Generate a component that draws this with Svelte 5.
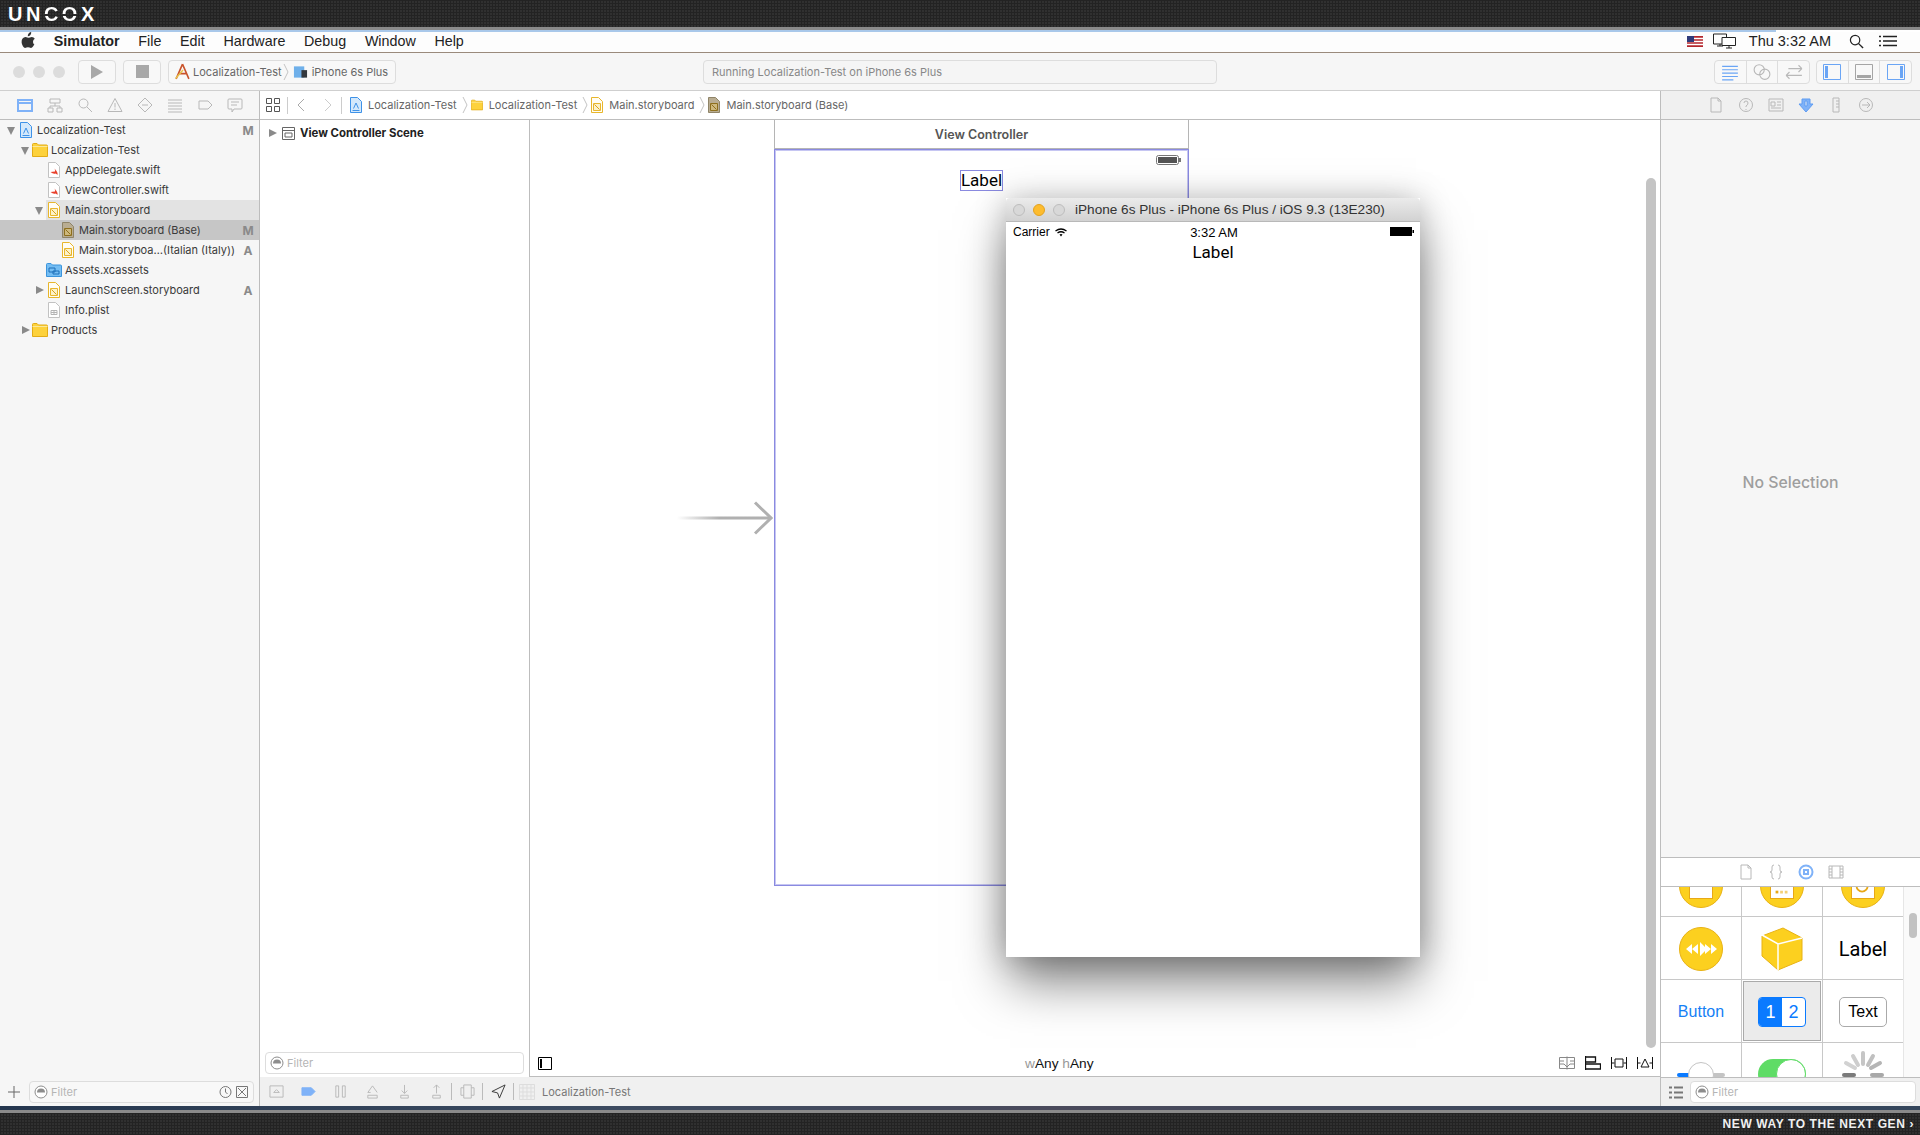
<script>
	const menus = ['File', 'Edit', 'Hardware', 'Debug', 'Window', 'Help'];

	const navIcons = [
		'M1 3h14v11H1z M1 6h14',
		'M3 2h10v4H3z M8 6v3 M3 11V9h10v2 M1 11h5v4H1z M10 11h5v4h-5z',
		'M11 6.500a4.500 4.500 0 1 1-9 0a4.500 4.500 0 1 1 9 0z M10 10l5 5',
		'M8 1.500L15 14.500H1z M8 6v4.500 M8 11.500v1.500',
		'M8 1l7 7-7 7-7-7z M5 8h6',
		'M1 3h14 M1 6h14 M1 9h14 M1 12h14 M1 15h14',
		'M2 4h9l4 4-4 4H2z',
		'M2 2h12q1 0 1 1v8q0 1-1 1H7l-2 3v-3H2q-1 0-1-1V3q0-1 1-1z M4 5h8 M4 8h6'
	];

	const inspectorIcons = [
		'M3 1h7l3 3v11H3z M10 1v3h3',
		'M14.500 8a6.500 6.500 0 1 1-13 0a6.500 6.500 0 1 1 13 0z M6 6q0-2 2-2t2 2q0 2-2 3v1 M8 12v1',
		'M1 2h14v12H1z M3 5h4v4H3z M9 5h4 M9 8h4 M3 11h10',
		'M4 2h8v5h3l-7 8-7-8h3z M7 4h2v5H7z',
		'M5 1h6v14H5z M8 4h3 M8 7h3 M8 10h3',
		'M14.500 8a6.500 6.500 0 1 1-13 0a6.500 6.500 0 1 1 13 0z M4 8h8 M9 5l3 3-3 3'
	];

	const libraryTabs = [
		'M3 1h7l3 3v11H3z M10 1v3h3',
		'M6 1q-2 0-2 2v3q0 2-2 2q2 0 2 2v3q0 2 2 2 M10 1q2 0 2 2v3q0 2 2 2q-2 0-2 2v3q0 2-2 2',
		'M14.500 8a6.500 6.500 0 1 1-13 0a6.500 6.500 0 1 1 13 0z M6 6h4v4H6z',
		'M1 2h14v12H1z M4 2v12 M12 2v12 M1 5h3 M1 8h3 M1 11h3 M12 5h3 M12 8h3 M12 11h3'
	];

	const debugIcons = [
		{ d: 'M1 2h14v12H1z M5 9l3-3 3 3z', x: 'g' },
		{ d: 'M1 4h10l4 4-4 4H1z', x: 'on' },
		{ d: 'M3 2h3v12H3z M10 2h3v12h-3z', x: 'g' },
		{ d: 'M8 2l-5 7h3 M8 2l5 7 M3 12h10v3H3z', x: 'g' },
		{ d: 'M8 1v9 M5 7l3 3 3-3 M4 12h8v3H4z', x: 'g' },
		{ d: 'M8 10V1 M5 4l3-3 3 3 M4 12h8v3H4z', x: 'g' },
		{ sep: true },
		{ d: 'M4 1h8v14H4z M4 4H1v8h3 M12 4h3v8h-3', x: 'g' },
		{ sep: true },
		{ d: 'M15 1L1 8l6 1.500L9 15z', x: 'dk' },
		{ sep: true }
	];

	const tree = [
		{ name: 'Localization-Test', depth: 0, open: true, icon: 'project', badge: 'M' },
		{ name: 'Localization-Test', depth: 1, open: true, icon: 'folder' },
		{ name: 'AppDelegate.swift', depth: 2, icon: 'swift' },
		{ name: 'ViewController.swift', depth: 2, icon: 'swift' },
		{ name: 'Main.storyboard', depth: 2, open: true, icon: 'story', hover: true },
		{ name: 'Main.storyboard (Base)', depth: 3, icon: 'storydark', badge: 'M', selected: true },
		{ name: 'Main.storyboa…(Italian (Italy))', depth: 3, icon: 'story', badge: 'A' },
		{ name: 'Assets.xcassets', depth: 2, icon: 'assets' },
		{ name: 'LaunchScreen.storyboard', depth: 2, closed: true, icon: 'story', badge: 'A' },
		{ name: 'Info.plist', depth: 2, icon: 'plist' },
		{ name: 'Products', depth: 1, closed: true, icon: 'folder' }
	];

	const crumbs = [
		{ name: 'Localization-Test', icon: 'project' },
		{ name: 'Localization-Test', icon: 'folder' },
		{ name: 'Main.storyboard', icon: 'story' },
		{ name: 'Main.storyboard (Base)', icon: 'storydark' }
	];
</script>

{#snippet ico(d, cls = '', size = 16)}
	<svg class="ico {cls}" viewBox="0 0 16 16" width={size} height={size}><path {d} /></svg>
{/snippet}

{#snippet fileIcon(kind)}
	{#if kind === 'folder'}
		<svg viewBox="0 0 16 14" width="16" height="14">
			<path d="M.5 13.500V1.500q0-1 1-1h3.500l1.500 1.500h8q1 0 1 1v10.500z" fill="#fdd23c" stroke="#e3ac16" />
			<path d="M.5 3.500h15" stroke="#fbe89a" />
		</svg>
	{:else if kind === 'assets'}
		<svg viewBox="0 0 16 14" width="16" height="14">
			<path d="M.5 13.500V1.500q0-1 1-1h3.500l1.500 1.500h8q1 0 1 1v10.500z" fill="#74bdf3" stroke="#3b94dc" />
			<path d="M3 5h6v4H3z M7 8h6v3H7z" fill="none" stroke="#1d6fb8" />
		</svg>
	{:else}
		<svg viewBox="0 0 12 16" width="12" height="16">
			{#if kind === 'project'}
				<path d="M.5.500h7l4 4v11H.5z" fill="#d3e8fb" stroke="#3e92e8" />
				<path d="M3.500 11.500L6 6l2.500 5.500 M2.500 13.500h7" fill="none" stroke="#3e92e8" />
			{:else if kind === 'story'}
				<path d="M.5.500h7l4 4v11H.5z" fill="#fffdf4" stroke="#e8b62c" />
				<path d="M2.500 6.500h7v7h-7z" fill="#fdf2c8" stroke="#e8b62c" />
				<path d="M3.500 7.500l5 5" stroke="#d9a21c" />
			{:else if kind === 'storydark'}
				<path d="M.5.500h7l4 4v11H.5z" fill="#b9ad92" stroke="#8f8468" />
				<path d="M2.500 6.500h7v7h-7z" fill="#cdb87e" stroke="#8e6f1c" />
				<path d="M3.500 7.500l5 5" stroke="#8e6f1c" />
			{:else if kind === 'plist'}
				<path d="M.5.500h7l4 4v11H.5z" fill="#fff" stroke="#c2c2c2" />
				<path d="M3 8.500h6v4H3z M3 10.500h6 M6 8.500v4" fill="none" stroke="#b5b5b5" />
			{:else}
				<path d="M.5.500h7l4 4v11H.5z" fill="#fff" stroke="#c2c2c2" />
				<path d="M2.500 10q3 2.500 5 1.500q1.500.5 2 1.500q.5-2-1-4l-2-2.500q1 2 .5 3z" fill="#e8402c" />
			{/if}
		</svg>
	{/if}
{/snippet}

{#snippet filter(extra = false)}
	<div class="filter">
		<svg viewBox="0 0 14 14" width="14" height="14">
			<circle cx="7" cy="7" r="6" fill="#fff" stroke="#8d8d8d" />
			<path d="M3 7.500a4 4 0 0 1 8 0z" fill="#8d8d8d" />
		</svg>
		<span>Filter</span>
		{#if extra}
			<svg class="filter-right" viewBox="0 0 30 14" width="30" height="14">
				<circle cx="6.500" cy="7" r="5.500" fill="none" stroke="#777" />
				<path d="M6.500 3.500V7l2 2" fill="none" stroke="#777" />
				<path d="M17.500 1.500h11v11h-11z M19 3l8 8 M27 3l-8 8" fill="none" stroke="#777" />
			</svg>
		{/if}
	</div>
{/snippet}

<div class="screen">
	<header class="banner">
		<span class="logo">UN<span class="slit">CO</span>X</span>
	</header>
	<div class="strip"></div>
	<div class="progress"></div>

	<nav class="menubar">
		<svg class="apple" viewBox="0 0 14 16" width="14" height="16">
			<path d="M10.200 0q.2 2-1 3.200T6.800 4.300q-.2-1.700 1-3T10.200 0zM13.500 11.800q-.6 1.400-1.500 2.700-1 1.400-2 1.400-.7 0-1.500-.4-.8-.3-1.500-.3-.8 0-1.600.4-.7.3-1.300.3-1.100 0-2.200-1.700Q.7 12.200.6 10.200q-.1-2.300 1-3.700 1.100-1.500 3-1.500.7 0 1.700.4.900.4 1.200.4.300 0 1.400-.4 1-.4 1.900-.4 2 .2 3 1.700-1.800 1.100-1.800 3 0 1.500 1 2.500.4.300.5.100z" fill="#333" />
		</svg>
		<b>Simulator</b>
		{#each menus as m}
			<span>{m}</span>
		{/each}
		<div class="menu-right">
			<svg class="flag" viewBox="0 0 16 11" width="16" height="11">
				<rect width="16" height="11" fill="#b3262c" />
				<path d="M0 2.500h16 M0 5.500h16 M0 8.500h16" stroke="#fff" stroke-width="1.400" />
				<rect width="7" height="6" fill="#2f3a7a" />
			</svg>
			<svg class="monitors" viewBox="0 0 23 16" width="23" height="16">
				<path d="M.5 1h13v10H.5z M4 13h6 M7 11v2" fill="none" stroke="#222" />
				<path d="M9 4.500h13.500v8H9z M13 15h6 M16 12.500V15" fill="#fff" stroke="#222" />
			</svg>
			<span class="clock">Thu 3:32 AM</span>
			<svg class="glass" viewBox="0 0 16 16" width="15" height="15">
				<circle cx="6.500" cy="6.500" r="5" fill="none" stroke="#222" stroke-width="1.300" />
				<path d="M10 10l5 5" stroke="#222" stroke-width="1.500" />
			</svg>
			<svg viewBox="0 0 18 12" width="18" height="12">
				<path d="M0 1.500h2 M4 1.500h14 M0 6h2 M4 6h14 M0 10.500h2 M4 10.500h14" stroke="#222" stroke-width="1.600" />
			</svg>
		</div>
	</nav>

	<div class="toolbar">
		<div class="lights">
			<i></i><i></i><i></i>
		</div>
		<button class="tb-btn"><span class="play"></span></button>
		<button class="tb-btn"><span class="stop"></span></button>
		<div class="scheme">
			<svg viewBox="0 0 16 16" width="17" height="17">
				<path d="M8 1l6 14M8 1L2 15 M4 10h8" fill="none" stroke="#c9542c" stroke-width="1.500" />
				<path d="M1 14l7-8 1 1-7 8z" fill="#e8c34a" />
			</svg>
			<span>Localization-Test</span>
			<svg class="chev" viewBox="0 0 6 20" width="6" height="20"><path d="M1 2l4 8-4 8" /></svg>
			<svg class="device" viewBox="0 0 16 14" width="15" height="14">
				<path d="M1 1h11v12H1z" fill="#6fb0ea" />
				<path d="M9 5h6v8H9z" fill="#33383e" />
			</svg>
			<span class="device-name">iPhone 6s Plus</span>
		</div>
		<div class="status">Running Localization-Test on iPhone 6s Plus</div>
		<div class="tb-group">
			<button class="seg">
				{@render ico('M1 3h14 M1 6h14 M1 9h14 M1 12h14 M1 15h10', 'blue', 18)}
			</button>
			<button class="seg">
				{@render ico('M10 6a4.500 4.500 0 1 1-9 0a4.500 4.500 0 1 1 9 0z M15 10a4.500 4.500 0 1 1-9 0a4.500 4.500 0 1 1 9 0z', '', 18)}
			</button>
			<button class="seg">
				{@render ico('M1 11h14 M1 11l3-3 M1 11l3 3 M15 5H3 M15 5l-3-3 M15 5l-3 3', '', 18)}
			</button>
		</div>
		<div class="tb-group">
			<button class="seg">
				<svg viewBox="0 0 18 16" width="18" height="16"><path d="M.5.500h17v15H.5z" fill="none" stroke="#6aa5f5" /><path d="M2 2h3v12H2z" fill="#6aa5f5" /></svg>
			</button>
			<button class="seg">
				<svg viewBox="0 0 18 16" width="18" height="16"><path d="M.5.500h17v15H.5z" fill="none" stroke="#a5a5a5" /><path d="M2 11h14v3H2z" fill="#a5a5a5" /></svg>
			</button>
			<button class="seg">
				<svg viewBox="0 0 18 16" width="18" height="16"><path d="M.5.500h17v15H.5z" fill="none" stroke="#6aa5f5" /><path d="M13 2h3v12h-3z" fill="#6aa5f5" /></svg>
			</button>
		</div>
	</div>

	<div class="main">
		<aside class="navigator">
			<div class="tabs nav-tabs">
				{#each navIcons as d, i}
					<span class="tab">{@render ico(d, i === 0 ? 'blue heavy' : '')}</span>
				{/each}
			</div>
			<div class="tree">
				{#each tree as row}
					<div class="row" class:hover={row.hover} class:selected={row.selected} style="padding-left: {row.depth * 14 + 4}px">
						<span class="tri" class:down={row.open} class:right={row.closed}></span>
						<span class="file-ico">{@render fileIcon(row.icon)}</span>
						<span class="name">{row.name}</span>
						{#if row.badge}<b class="badge">{row.badge}</b>{/if}
					</div>
				{/each}
			</div>
			<div class="nav-foot">
				<svg class="plus" viewBox="0 0 12 12" width="12" height="12"><path d="M6 0v12M0 6h12" stroke="#666" /></svg>
				{@render filter(true)}
			</div>
		</aside>

		<section class="editor">
			<div class="jumpbar">
				<svg class="jb-grid" viewBox="0 0 14 14" width="14" height="14">
					<path d="M.5.500h5v5h-5z M8.500.500h5v5h-5z M.5 8.500h5v5h-5z M8.500 8.500h5v5h-5z" fill="none" stroke="#555" />
				</svg>
				<i class="jb-sep"></i>
				<svg class="jb-back" viewBox="0 0 8 14" width="8" height="14"><path d="M7 1L1 7l6 6" fill="none" stroke="#aaa" /></svg>
				<svg class="jb-fwd" viewBox="0 0 8 14" width="8" height="14"><path d="M1 1l6 6-6 6" fill="none" stroke="#ccc" /></svg>
				<i class="jb-sep"></i>
				{#each crumbs as c, i}
					<span class="crumb">
						<span class="crumb-ico">{@render fileIcon(c.icon)}</span>
						<span>{c.name}</span>
					</span>
					{#if i < crumbs.length - 1}
						<svg class="chev" viewBox="0 0 6 20" width="6" height="20"><path d="M1 2l4 8-4 8" /></svg>
					{/if}
				{/each}
			</div>

			<div class="panes">
				<div class="outline">
					<div class="scene-row">
						<span class="tri right"></span>
						<svg viewBox="0 0 13 13" width="13" height="13">
							<path d="M.5.500h12v12H.5z M.5 3.500h12 M3 6h7v4H3z" fill="none" stroke="#666" />
						</svg>
						<b>View Controller Scene</b>
					</div>
					<div class="outline-foot">{@render filter()}</div>
				</div>

				<div class="canvas">
					<div class="stage">
						<svg class="entry" viewBox="0 0 96 34" width="96" height="34">
							<defs>
								<linearGradient id="fade">
									<stop offset="0" stop-color="#b0b0b0" stop-opacity="0" />
									<stop offset="0.45" stop-color="#b0b0b0" />
								</linearGradient>
							</defs>
							<rect x="0" y="15.500" width="94" height="3" fill="url(#fade)" />
							<path d="M78 1.500L94 17 78 32.500" fill="none" stroke="#b0b0b0" stroke-width="3" />
						</svg>

						<div class="scene">
							<div class="scene-title">View Controller</div>
							<div class="scene-view">
								<svg class="scene-batt" viewBox="0 0 25 10" width="25" height="10">
									<rect x=".5" y=".5" width="22" height="9" rx="2" fill="#fff" stroke="#777" />
									<rect x="2" y="2" width="19" height="6" fill="#555" />
									<rect x="23" y="3" width="2" height="4" fill="#777" />
								</svg>
								<span class="scene-label">Label</span>
							</div>
						</div>

						<div class="sim">
							<div class="sim-title">
								<div class="sim-lights">
									<i></i><i class="min"></i><i></i>
								</div>
								<span>iPhone 6s Plus - iPhone 6s Plus / iOS 9.3 (13E230)</span>
							</div>
							<div class="sim-status">
								<span class="carrier">Carrier</span>
								<svg class="wifi" viewBox="0 0 12 9" width="12" height="9">
									<path d="M.5 3q5.500-4 11 0 M2.500 5q3.500-2.500 7 0" fill="none" stroke="#000" stroke-width="1.300" />
									<path d="M4.500 6.500q1.500-1 3 0L6 8.500z" fill="#000" />
								</svg>
								<span class="sim-time">3:32 AM</span>
								<svg class="sim-batt" viewBox="0 0 24 9" width="24" height="9">
									<rect width="22" height="9" fill="#000" />
									<rect x="22.500" y="3" width="1.500" height="3" fill="#000" />
								</svg>
							</div>
							<div class="sim-label">Label</div>
						</div>

						<div class="scroller"></div>
					</div>

					<div class="canvas-bar">
						<svg viewBox="0 0 14 13" width="14" height="13">
							<path d="M.5.500h13v12H.5z" fill="#fff" stroke="#000" />
							<path d="M2 2h2v9H2z" fill="#000" />
						</svg>
						<span class="size"><em>w</em>Any <em>h</em>Any</span>
						<div class="canvas-tools">
							<svg viewBox="0 0 16 14" width="16" height="14"><path d="M.5 1.500h15v11H.5z M8 .5v13 M1 5h4 M1 8h4 M11 5h4 M11 8h4 M5 8l3 3 3-3" fill="none" stroke="#888" /></svg>
							<svg viewBox="0 0 16 14" width="16" height="14"><path d="M.5 0v14 M.5 1h10v5H.5 M.5 8h15v5H.5" fill="none" stroke="#111" stroke-width="1.300" /></svg>
							<svg viewBox="0 0 16 14" width="16" height="14"><path d="M.5 1v12 M15.500 1v12 M.5 7h3 M12.500 7h3 M4 3h8v8H4z" fill="none" stroke="#111" /></svg>
							<svg viewBox="0 0 16 14" width="16" height="14"><path d="M.5 1v12 M15.500 1v12 M.5 7h3 M12.500 7h3 M8 3l4 8H4z" fill="none" stroke="#111" /></svg>
						</div>
					</div>
				</div>
			</div>

			<div class="debugbar">
				{#each debugIcons as item}
					{#if item.sep}
						<i class="db-sep"></i>
					{:else}
						<span class="db-ico">{@render ico(item.d, item.x, 15)}</span>
					{/if}
				{/each}
				<svg class="db-loc" viewBox="0 0 16 16" width="16" height="16">
					<path d="M.5.500h15v15H.5z M.5 4h15 M.5 8h15 M.5 12h15 M4 .5v15 M8 .5v15 M12 .5v15" fill="none" stroke="#ddd" />
				</svg>
				<span class="db-name">Localization-Test</span>
			</div>
		</section>

		<aside class="inspector">
			<div class="tabs ins-tabs">
				{#each inspectorIcons as d, i}
					<span class="tab">{@render ico(d, i === 3 ? 'filled' : '')}</span>
				{/each}
			</div>
			<div class="no-sel">No Selection</div>
			<div class="lib-tabs">
				{#each libraryTabs as d, i}
					<span class="tab">{@render ico(d, i === 2 ? 'blue heavy' : '')}</span>
				{/each}
			</div>
			<div class="library">
				<div class="lib-grid">
					<div class="cell"><span class="coin"><i class="card"></i></span></div>
					<div class="cell">
						<span class="coin">
							<i class="card"><svg viewBox="0 0 24 24" width="22" height="22"><path d="M5 16h3v3H5z" fill="#e8a816" /><path d="M10 16h3v3h-3z M15 16h3v3h-3z" fill="#f3cf75" /></svg></i>
						</span>
					</div>
					<div class="cell">
						<span class="coin">
							<i class="card"><svg viewBox="0 0 24 24" width="22" height="22"><circle cx="11" cy="11" r="6" fill="none" stroke="#e8a816" stroke-width="2" /></svg></i>
						</span>
					</div>

					<div class="cell">
						<span class="coin">
							<svg viewBox="0 0 32 16" width="32" height="16">
								<path d="M7 3L1 8l6 5z M13 3L7 8l6 5z M15 1l7 7-7 7z M26 3l6 5-6 5z M20 3l6 5-6 5z" fill="#fff" />
							</svg>
						</span>
					</div>
					<div class="cell">
						<svg viewBox="0 0 42 44" width="42" height="44">
							<path d="M22 1L41 11V33L17 43L1 29V9z" fill="#fcd01f" stroke="#e8b214" />
							<path d="M1 8L17 17L41 11 M17 17V43" fill="none" stroke="#fff" stroke-width="1.500" />
						</svg>
					</div>
					<div class="cell label-cell">Label</div>

					<div class="cell button-cell">Button</div>
					<div class="cell picked">
						<div class="segmented"><span class="on">1</span><span>2</span></div>
					</div>
					<div class="cell"><span class="textbox">Text</span></div>

					<div class="cell top">
						<div class="slider"><i class="knob"></i></div>
					</div>
					<div class="cell top">
						<div class="switch"><i></i></div>
					</div>
					<div class="cell top">
						<svg class="spinner" viewBox="0 0 44 34" width="44" height="34">
							<g stroke-width="4" stroke-linecap="round">
								<path d="M22 2v11" stroke="#c6c6c6" />
								<path d="M12 5l5 9" stroke="#cdcdcd" />
								<path d="M32 5l-5 9" stroke="#c0c0c0" />
								<path d="M5 12l9 5" stroke="#d2d2d2" />
								<path d="M39 12l-9 5" stroke="#b5b5b5" />
								<path d="M3 24h10" stroke="#7b7b7b" />
								<path d="M31 24h10" stroke="#a8a8a8" />
							</g>
						</svg>
					</div>
				</div>
				<div class="lib-scroll"><i></i></div>
			</div>
			<div class="lib-foot">
				<svg viewBox="0 0 14 13" width="14" height="13">
					<path d="M0 1.500h3 M5 1.500h9 M0 6.500h3 M5 6.500h9 M0 11.500h3 M5 11.500h9" stroke="#777" stroke-width="2" />
				</svg>
				{@render filter()}
			</div>
		</aside>
	</div>

	<div class="deep"></div>
	<div class="strip"></div>
	<footer class="tagline">
		<span>NEW WAY TO THE NEXT GEN ›</span>
	</footer>
</div>

<style>
	:global(body) {
		margin: 0;
		background: #2b2b2b;
	}
	.screen {
		width: 1920px;
		height: 1135px;
		overflow: hidden;
		display: flex;
		flex-direction: column;
		font-family: Inter, 'Liberation Sans', sans-serif;
		font-size: 11px;
		color: #333;
		background: #fff;
	}
	.banner,
	.tagline {
		background-color: #303030;
		background-image: linear-gradient(#232323 1px, transparent 1px), linear-gradient(90deg, #232323 1px, transparent 1px);
		background-size: 3px 3px;
	}
	.banner {
		height: 27px;
		padding-left: 8px;
		display: flex;
		align-items: center;
	}
	.logo {
		font: bold 20px 'Liberation Sans', sans-serif;
		letter-spacing: 3.5px;
		color: #fff;
		transform: translateY(1px);
	}
	.slit {
		background: linear-gradient(#fff 50%, #2b2b2b 50%, #2b2b2b 60%, #fff 60%);
		-webkit-background-clip: text;
		background-clip: text;
		color: transparent;
	}
	.strip {
		height: 3px;
		background: #8a8a8a;
	}
	.progress {
		height: 2px;
		background: linear-gradient(90deg, #a9c8ea 1776px, #fff 1776px);
	}
	.menubar {
		height: 18px;
		display: flex;
		align-items: center;
		gap: 18.700px;
		padding: 0 23px 2px 21px;
		background: #fdfdfd;
		border-bottom: 1px solid #9a8a7c;
		font: 14.300px 'Liberation Sans', sans-serif;
		color: #222;
	}
	.apple {
		margin-bottom: 2px;
	}
	.menu-right {
		margin-left: auto;
		display: flex;
		align-items: center;
		gap: 12px;
	}
	.monitors {
		margin-left: -2px;
	}
	.clock {
		font-size: 14.500px;
		margin-left: 1px;
		margin-right: 6px;
	}
	.glass {
		margin-right: 3px;
	}
	.toolbar {
		height: 37px;
		display: flex;
		align-items: center;
		padding: 0 8px 0 13px;
		background: #f6f6f6;
		border-bottom: 1px solid #cfcfcf;
	}
	.lights {
		display: flex;
		gap: 8px;
		margin-right: 13px;
	}
	.lights i {
		width: 12px;
		height: 12px;
		border-radius: 50%;
		background: #dcdcdc;
	}
	.tb-btn {
		width: 38px;
		height: 24px;
		margin-right: 7px;
		padding: 0;
		display: flex;
		align-items: center;
		justify-content: center;
		background: #f8f8f8;
		border: 1px solid #ddd;
		border-radius: 4px;
	}
	.play {
		width: 0;
		height: 0;
		border-left: 12px solid #a8a8a8;
		border-top: 7.500px solid transparent;
		border-bottom: 7.500px solid transparent;
	}
	.stop {
		width: 13px;
		height: 13px;
		background: #a8a8a8;
	}
	.scheme {
		width: 228px;
		height: 24px;
		box-sizing: border-box;
		display: flex;
		align-items: center;
		gap: 1px;
		padding-left: 5px;
		background: #f8f8f8;
		border: 1px solid #ddd;
		border-radius: 4px;
		color: #666;
	}
	.scheme span {
		margin-left: 1px;
	}
	.scheme .device {
		margin-left: 3px;
	}
	.scheme .device-name {
		margin-left: 3px;
	}
	.chev {
		fill: none;
		stroke: #c4c4c4;
		flex: none;
	}
	.status {
		width: 514px;
		height: 24px;
		box-sizing: border-box;
		margin-left: 307px;
		padding-left: 8px;
		line-height: 22px;
		color: #888;
		background: #f5f5f5;
		border: 1px solid #ddd;
		border-radius: 4px;
	}
	.tb-group {
		width: 96px;
		box-sizing: border-box;
		display: flex;
		height: 24px;
		margin-left: 6px;
		background: #f8f8f8;
		border: 1px solid #ddd;
		border-radius: 4px;
	}
	.status + .tb-group {
		margin-left: auto;
	}
	.seg {
		flex: 1;
		padding: 0;
		display: flex;
		align-items: center;
		justify-content: center;
		background: none;
		border: 0;
		border-left: 1px solid #ddd;
	}
	.seg:first-child {
		border-left: 0;
	}
	.ico {
		fill: none;
		stroke: #b8b8b8;
		display: block;
	}
	.ico.blue {
		stroke: #6aa5f5;
	}
	.ico.heavy {
		stroke: #7fb2f8;
		stroke-width: 2;
	}
	.ico.filled {
		fill: #7fb2f8;
		stroke: #5f9cf2;
		fill-rule: evenodd;
	}
	.ico.on {
		fill: #7fb2f8;
		stroke: #7fb2f8;
	}
	.ico.dk {
		stroke: #333;
	}
	.main {
		height: 1015px;
		display: flex;
	}
	.tabs {
		height: 28px;
		display: flex;
		align-items: center;
		justify-content: center;
		border-bottom: 1px solid #bdbdbd;
	}
	.tab {
		width: 30px;
		display: flex;
		justify-content: center;
	}
	.navigator {
		width: 259px;
		flex: none;
		display: flex;
		flex-direction: column;
		background: #f6f6f6;
		border-right: 1px solid #bdbdbd;
	}
	.nav-tabs {
		justify-content: flex-start;
		padding-left: 10px;
	}
	.tree {
		flex: 1;
	}
	.row {
		height: 20px;
		display: flex;
		align-items: center;
		padding-right: 4px;
		color: #3a3a3a;
	}
	.row.hover {
		background: linear-gradient(90deg, transparent 46px, #e3e3e3 46px);
	}
	.row.selected {
		background: #c6c6c6;
	}
	.tri {
		width: 14px;
		height: 12px;
		flex: none;
		position: relative;
	}
	.tri.down::before {
		content: '';
		position: absolute;
		left: 3px;
		top: 3px;
		border-top: 8px solid #8a8a8a;
		border-left: 4.500px solid transparent;
		border-right: 4.500px solid transparent;
	}
	.tri.right::before {
		content: '';
		position: absolute;
		left: 4px;
		top: 2px;
		border-left: 8px solid #8a8a8a;
		border-top: 4.500px solid transparent;
		border-bottom: 4.500px solid transparent;
	}
	.file-ico {
		width: 16px;
		margin-right: 3px;
		display: flex;
		justify-content: center;
		flex: none;
	}
	.name {
		white-space: nowrap;
	}
	.badge {
		margin-left: auto;
		width: 14px;
		text-align: center;
		font-size: 12px;
		color: #8a8a8a;
	}
	.nav-foot {
		height: 29px;
		box-sizing: border-box;
		display: flex;
		align-items: center;
		padding: 0 5px 0 8px;
		gap: 9px;
	}
	.filter {
		flex: 1;
		height: 22px;
		box-sizing: border-box;
		display: flex;
		align-items: center;
		gap: 3px;
		padding: 0 4px 0 4px;
		color: #b5b5b5;
		background: #fff;
		border: 1px solid #ddd;
		border-radius: 4px;
	}
	.nav-foot .filter {
		background: #f8f8f8;
	}
	.filter-right {
		margin-left: auto;
	}
	.editor {
		flex: 1;
		min-width: 0;
		display: flex;
		flex-direction: column;
	}
	.jumpbar {
		height: 28px;
		flex: none;
		display: flex;
		align-items: center;
		padding-left: 6px;
		color: #666;
		border-bottom: 1px solid #bdbdbd;
	}
	.jb-sep {
		width: 1px;
		height: 17px;
		margin: 0 8px 0 7px;
		background: #ccc;
	}
	.jb-back {
		margin: 0 9px 0 1px;
	}
	.jb-fwd {
		margin: 0 2px 0 10px;
	}
	.crumb {
		display: flex;
		align-items: center;
		gap: 6px;
		white-space: nowrap;
	}
	.crumb-ico {
		width: 12px;
		display: flex;
		justify-content: center;
	}
	.jumpbar .chev {
		margin: 0 3px 0 5px;
	}
	.panes {
		flex: 1;
		min-height: 0;
		display: flex;
	}
	.outline {
		width: 270px;
		flex: none;
		box-sizing: border-box;
		display: flex;
		flex-direction: column;
		border-right: 1px solid #bdbdbd;
	}
	.scene-row {
		display: flex;
		align-items: center;
		gap: 3px;
		padding: 6px 0 0 5px;
		font-size: 11.400px;
		color: #222;
	}
	.scene-row svg {
		margin-right: 2px;
	}
	.outline-foot {
		margin-top: auto;
		height: 29px;
		display: flex;
		align-items: center;
		padding: 0 5px 0 5px;
	}
	.canvas {
		flex: 1;
		min-width: 0;
		display: flex;
		flex-direction: column;
	}
	.stage {
		flex: 1;
		position: relative;
		overflow: hidden;
	}
	.entry {
		position: absolute;
		left: 147px;
		top: 381px;
	}
	.scene {
		position: absolute;
		left: 244px;
		top: 0;
		width: 415px;
	}
	.scene-title {
		height: 29px;
		line-height: 29px;
		text-align: center;
		font-size: 12.500px;
		font-weight: 600;
		color: #555;
		background: #fff;
		border: 1px solid #b5b5b5;
		border-top: 0;
		box-sizing: border-box;
	}
	.scene-view {
		height: 737px;
		box-sizing: border-box;
		position: relative;
		display: flex;
		justify-content: center;
		background: #fff;
		border: 1px solid #8a8ae0;
		box-shadow: inset 0 0 0 1px #c6c6f2;
	}
	.scene-batt {
		position: absolute;
		right: 7px;
		top: 5px;
	}
	.scene-label {
		height: 21px;
		margin-top: 20px;
		box-sizing: border-box;
		padding: 0;
		font: 400 17px/19px Roboto, sans-serif;
		color: #000;
		border: 1px solid #8a8ae0;
	}
	.sim {
		position: absolute;
		left: 476px;
		top: 78px;
		width: 414px;
		height: 759px;
		background: #fff;
		box-shadow: 0 28px 48px -4px rgba(0, 0, 0, 0.5), 0 0 30px rgba(0, 0, 0, 0.22);
	}
	.sim-title {
		height: 24px;
		display: flex;
		align-items: center;
		gap: 10px;
		padding-left: 7px;
		font: 13.600px 'Liberation Sans', sans-serif;
		color: #333;
		background: linear-gradient(#ebebeb, #d2d2d2);
		border-radius: 4px 4px 0 0;
		box-sizing: border-box;
		border-bottom: 1px solid #b8b8b8;
	}
	.sim-lights {
		display: flex;
		gap: 8px;
	}
	.sim-lights i {
		width: 12px;
		height: 12px;
		border-radius: 50%;
		background: #d8d8d8;
		box-sizing: border-box;
		border: 1px solid #bdbdbd;
	}
	.sim-lights i.min {
		background: #fdbc2e;
		border-color: #e3a21f;
	}
	.sim-status {
		height: 20px;
		position: relative;
		display: flex;
		align-items: center;
		padding: 0 6px 0 7px;
		color: #000;
		font: 12px 'Liberation Sans', sans-serif;
	}
	.wifi {
		margin-left: 5px;
	}
	.sim-time {
		position: absolute;
		left: 2px;
		right: 0;
		text-align: center;
		font-size: 13px;
	}
	.sim-batt {
		margin-left: auto;
		margin-bottom: 2px;
	}
	.sim-label {
		text-align: center;
		font: 400 17px/22px Roboto, sans-serif;
		color: #000;
		margin-top: -1px;
	}
	.scroller {
		position: absolute;
		right: 4px;
		top: 58px;
		bottom: 0;
		width: 10px;
		border-radius: 5px;
		background: #c4c4c4;
	}
	.canvas-bar {
		height: 29px;
		flex: none;
		display: flex;
		align-items: center;
		padding: 2px 7px 0 8px;
		border-bottom: 1px solid #bdbdbd;
		box-sizing: border-box;
	}
	.size {
		margin-left: 473px;
		font: 13.700px 'Liberation Sans', sans-serif;
		color: #111;
	}
	.size em {
		font-style: normal;
		color: #999;
	}
	.canvas-tools {
		margin-left: auto;
		display: flex;
		gap: 10px;
	}
	.debugbar {
		height: 29px;
		flex: none;
		display: flex;
		align-items: center;
		background: #f0f0f0;
		color: #777;
	}
	.db-ico {
		width: 32px;
		flex: none;
		display: flex;
		justify-content: center;
	}
	.db-sep {
		width: 1px;
		height: 17px;
		margin: 0 -1px;
		background: #bbb;
	}
	.db-loc {
		margin-left: 6px;
		margin-right: 7px;
	}
	.inspector {
		width: 260px;
		flex: none;
		box-sizing: border-box;
		display: flex;
		flex-direction: column;
		background: #f6f6f6;
		border-left: 1px solid #bdbdbd;
	}
	.ins-tabs {
		background: #f0f0f0;
	}
	.no-sel {
		flex: 1;
		display: flex;
		align-items: center;
		justify-content: center;
		font-size: 15.800px;
		font-weight: 500;
		color: #9e9e9e;
		padding-bottom: 13px;
	}
	.lib-tabs {
		height: 30px;
		flex: none;
		display: flex;
		align-items: center;
		justify-content: center;
		background: #fff;
		border-top: 1px solid #bdbdbd;
		border-bottom: 1px solid #bdbdbd;
		box-sizing: border-box;
	}
	.library {
		height: 190px;
		flex: none;
		display: flex;
		overflow: hidden;
		background: #fff;
	}
	.lib-grid {
		width: 242px;
		flex: none;
		margin-top: -33px;
		display: grid;
		grid-template-columns: repeat(3, 81px);
		grid-auto-rows: 63px;
		align-self: flex-start;
	}
	.cell {
		box-sizing: border-box;
		display: flex;
		align-items: center;
		justify-content: center;
		padding-top: 2px;
		overflow: hidden;
		border-right: 1px solid #c8c8c8;
		border-bottom: 1px solid #c8c8c8;
		position: relative;
	}
	.coin {
		width: 44px;
		height: 44px;
		box-sizing: border-box;
		display: flex;
		align-items: center;
		justify-content: center;
		border-radius: 50%;
		background: #fcd01f;
		border: 1px solid #e8b214;
	}
	.card {
		width: 24px;
		height: 24px;
		box-sizing: border-box;
		background: #fff;
		border: 1px solid #e8a816;
		position: relative;
		top: 1px;
	}
	.label-cell {
		font: 400 20px Roboto, sans-serif;
		color: #000;
	}
	.button-cell {
		font: 16px 'Liberation Sans', sans-serif;
		color: #1580f5;
	}
	.cell.picked::before {
		content: '';
		position: absolute;
		inset: 1px 1px 1px 1px;
		background: #ebebeb;
		border: 1px solid #aaa;
	}
	.segmented {
		position: relative;
		width: 48px;
		height: 30px;
		box-sizing: border-box;
		display: flex;
		background: #fff;
		border: 1px solid #0a7aff;
		border-radius: 4px;
		overflow: hidden;
		font: 18px/28px 'Liberation Sans', sans-serif;
		color: #0a7aff;
		text-align: center;
	}
	.segmented span {
		flex: 1;
	}
	.segmented .on {
		background: #0a7aff;
		color: #fff;
	}
	.textbox {
		width: 48px;
		height: 30px;
		box-sizing: border-box;
		text-align: center;
		font: 16px/28px 'Liberation Sans', sans-serif;
		color: #000;
		border: 1px solid #aaa;
		border-radius: 5px;
	}
	.cell.top {
		align-items: flex-start;
		padding-top: 0;
	}
	.slider {
		width: 48px;
		height: 4px;
		margin-top: 30px;
		position: relative;
		background: linear-gradient(90deg, #0a7aff 12px, #c4c4c4 12px);
		border-radius: 2px;
	}
	.knob {
		position: absolute;
		left: 11px;
		top: -11px;
		width: 26px;
		height: 26px;
		box-sizing: border-box;
		background: #fff;
		border: 1px solid #c4c4c4;
		border-radius: 50%;
	}
	.switch {
		width: 48px;
		height: 30px;
		margin-top: 16px;
		box-sizing: border-box;
		position: relative;
		background: #5fdc66;
		border-radius: 15px;
	}
	.switch i {
		position: absolute;
		right: 0;
		top: 0;
		width: 30px;
		height: 30px;
		box-sizing: border-box;
		background: #fff;
		border: 1px solid #5fdc66;
		border-radius: 50%;
	}
	.spinner {
		margin-top: 8px;
	}
	.lib-scroll {
		flex: 1;
		background: #fafafa;
		border-left: 1px solid #e6e6e6;
		position: relative;
	}
	.lib-scroll i {
		position: absolute;
		left: 5px;
		top: 26px;
		width: 8px;
		height: 25px;
		border-radius: 4px;
		background: #c2c2c2;
	}
	.lib-foot {
		height: 29px;
		flex: none;
		box-sizing: border-box;
		display: flex;
		align-items: center;
		gap: 7px;
		padding: 0 4px 0 8px;
		background: #f0f0f0;
		border-top: 1px solid #bdbdbd;
	}
	.deep {
		height: 4px;
		background: linear-gradient(90deg, #24364e, #3b4a60 30%, #4a4a5c 55%, #34465c);
	}
	.tagline {
		height: 22px;
		display: flex;
		align-items: center;
		justify-content: flex-end;
		padding-right: 6px;
		font: bold 12px 'Liberation Sans', sans-serif;
		letter-spacing: 0.6px;
		color: #f0f0f0;
	}
</style>
